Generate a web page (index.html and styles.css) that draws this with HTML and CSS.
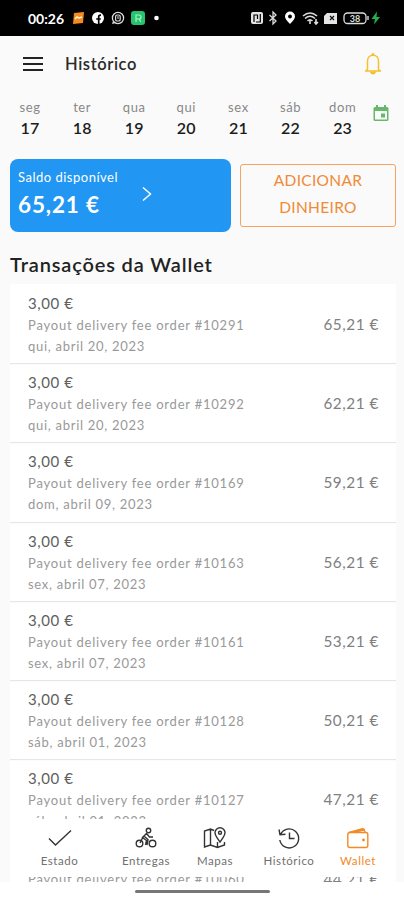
FILE: index.html
```
<!DOCTYPE html>
<html lang="pt">
<head>
<meta charset="utf-8">
<title>Histórico</title>
<link rel="stylesheet" href="styles.css">
</head>
<body>
<div class="phone">
  <div class="status">
    <span class="clock">00:26</span>
    <svg class="s-left" width="92" height="16" viewBox="0 0 92 16">
      <path d="M2 3L12 2L11 13L1 14Z" fill="#f58a1f"/><path d="M3 9L5 7L7 8L10 7" stroke="#fff3d8" stroke-width="1.5" fill="none"/>
      <circle cx="26" cy="8" r="6" fill="#fff"/><path d="M26.7 14V6.8Q26.7 5 29 5.2M24.2 9H28.8" stroke="#000" stroke-width="1.7" fill="none"/>
      <circle cx="46" cy="8" r="5.6" fill="none" stroke="#ddd" stroke-width="1.3"/><path d="M41 11L40 14L44 13" fill="#ddd"/><rect x="43.6" y="5" width="4.6" height="6" rx="1.6" fill="none" stroke="#ddd" stroke-width="1.2"/><path d="M46 6V9" stroke="#ddd"/>
      <rect x="59" y="1" width="14" height="14" rx="3" fill="#27c46f"/><path d="M64 12V5H67Q69 5 69 7T67 9H64M67 9L69 12" fill="none" stroke="#a6f1c8" stroke-width="1.2"/>
      <circle cx="84.500" cy="8" r="2.300" fill="#fff"/>
    </svg>
    <svg class="s-right" width="132" height="16" viewBox="0 0 132 16">
      <rect x="1" y="2" width="12" height="12" rx="2" fill="#e4e4e4"/><path d="M4 12V5H7.500V9M6 12H10.300V4" stroke="#000" stroke-width="1.200" fill="none"/>
      <path d="M19.500 5L26 11L23 14V2L26 5L19.500 11" stroke="#ddd" stroke-width="1.300" fill="none"/>
      <path d="M40 14Q35 9 35 6.500A5 5 0 0 1 45 6.500Q45 9 40 14Z" fill="#fff"/><circle cx="40" cy="6.500" r="1.900" fill="#000"/>
      <g fill="none" stroke="#ddd" stroke-width="1.600"><path d="M53 6Q60 0 67 6M55 8.500Q60 4 65 8.500M57.500 11Q60 8.500 62.500 11M60 10V14M66 9V14M64.500 12L66 14L68 12"/></g>
      <path d="M77 3H87V14H74V6Z" fill="#e4e4e4"/><path d="M80 6L84 10M84 6L80 10" stroke="#111" stroke-width="1.200"/>
      <rect x="94" y="3" width="22" height="10.500" rx="3.500" fill="none" stroke="#ddd" stroke-width="1.300"/><path d="M118 6V10" stroke="#ddd" stroke-width="1.400"/><text x="105" y="11.500" text-anchor="middle" class="battery">38</text>
      <path d="M127 1.500L121.500 9H125L124 14.500L130 7H126.500Z" fill="#22b14c"/>
    </svg>
  </div>

  <header class="top">
    <svg width="20" height="16" viewBox="0 0 20 16"><path d="M0 2H20M0 8H20M0 14H20" stroke="#222" stroke-width="1.900"/></svg>
    <h1>Histórico</h1>
    <svg class="bell" width="18" height="24" viewBox="0 0 18 24"><path d="M3.500 17.500V9C3.500 5.600 5.800 3.200 9 3.200S14.500 5.600 14.500 9V17.500L16.500 19H1.500Z" fill="none" stroke="#f5c02c" stroke-width="1.500" stroke-linejoin="round"/><path d="M7.500 3Q7.500 1 9 1T10.500 3ZM5.800 19.500H12.200Q11.500 22.500 9 22.500T5.800 19.500Z" fill="#f5c02c"/></svg>
  </header>

  <section class="week">
    <div class="day"><span>seg</span><b>17</b></div>
    <div class="day"><span>ter</span><b>18</b></div>
    <div class="day"><span>qua</span><b>19</b></div>
    <div class="day"><span>qui</span><b>20</b></div>
    <div class="day"><span>sex</span><b>21</b></div>
    <div class="day"><span>sáb</span><b>22</b></div>
    <div class="day"><span>dom</span><b>23</b></div>
    <svg class="calendar" width="16" height="18" viewBox="0 0 16 18"><path fill="#66b96b" fill-rule="evenodd" d="M3 1H5V3H11V1H13V3H14Q15.500 3 15.500 4.500V15.500Q15.500 17 14 17H2Q.5 17 .5 15.500V4.500Q.5 3 2 3H3ZM2 7V15.500H14V7ZM8 9.500H12V13.500H8Z"/></svg>
  </section>

  <section class="funds">
    <div class="balance">
      <div><p>Saldo disponível</p><strong>65,21 €</strong></div>
      <svg width="10" height="16" viewBox="0 0 10 16"><path d="M1 1.500L8.500 8L1 14.500" fill="none" stroke="#fff" stroke-width="1.500"/></svg>
    </div>
    <button class="add">ADICIONAR DINHEIRO</button>
  </section>

  <h2>Transações da Wallet</h2>
  <main class="list">
    <article class="row"><div><h3>3,00 €</h3><p>Payout delivery fee order #10291</p><p class="date">qui, abril 20, 2023</p></div><span class="total">65,21 €</span></article>
    <article class="row"><div><h3>3,00 €</h3><p>Payout delivery fee order #10292</p><p class="date">qui, abril 20, 2023</p></div><span class="total">62,21 €</span></article>
    <article class="row"><div><h3>3,00 €</h3><p>Payout delivery fee order #10169</p><p class="date">dom, abril 09, 2023</p></div><span class="total">59,21 €</span></article>
    <article class="row"><div><h3>3,00 €</h3><p>Payout delivery fee order #10163</p><p class="date">sex, abril 07, 2023</p></div><span class="total">56,21 €</span></article>
    <article class="row"><div><h3>3,00 €</h3><p>Payout delivery fee order #10161</p><p class="date">sex, abril 07, 2023</p></div><span class="total">53,21 €</span></article>
    <article class="row"><div><h3>3,00 €</h3><p>Payout delivery fee order #10128</p><p class="date">sáb, abril 01, 2023</p></div><span class="total">50,21 €</span></article>
    <article class="row"><div><h3>3,00 €</h3><p>Payout delivery fee order #10127</p><p class="date">sáb, abril 01, 2023</p></div><span class="total">47,21 €</span></article>
    <article class="row last"><div><p>Payout delivery fee order #10060</p></div><span class="total">44,21 €</span></article>
  </main>

  <nav class="tabs">
    <a><svg width="24" height="24" viewBox="0 0 24 24"><path d="M1 12.500L7.500 19L23 4.500"/></svg>Estado</a>
    <a><svg width="24" height="24" viewBox="0 0 24 24"><circle cx="5.500" cy="17.500" r="3.300"/><circle cx="18.500" cy="17.500" r="3.300"/><circle cx="14.500" cy="4.500" r="2.200"/><path d="M12.500 7.500L8.500 11.500L12.500 14.500L11.500 19M10.500 10.500L14 13.500L13 19M12.500 7.500L15.500 11H19M8.500 12L6 17"/></svg>Entregas</a>
    <a><svg width="24" height="24" viewBox="0 0 24 24"><path d="M11 4.500L7.500 3L1.500 5V21L7.500 19L14.500 21.500L21.500 19V16M7.500 3V19M14.500 16V21.500M17 16C14 12 12 9.500 12 6.800A5 5 0 0 1 22 6.800C22 9.500 20 12 17 16Z"/><circle cx="17" cy="6.800" r="1.500"/></svg>Mapas</a>
    <a><svg width="24" height="24" viewBox="0 0 24 24"><path d="M3.500 8.500A9.500 9.500 0 1 1 2.800 14M2 3.500L3 8.800L8.500 8.200M12.500 6.500V12.500H17.500"/></svg>Histórico</a>
    <a class="active"><svg width="24" height="24" viewBox="0 0 24 24"><rect x="1.800" y="6.500" width="20" height="15" rx="2"/><path d="M3 6.500L17 2.500L19.500 6.500M8 6.500L19 3.500"/><circle cx="17.500" cy="14" r=".7"/></svg>Wallet</a>
  </nav>
  <footer class="gesture"><span></span></footer>
</div>
</body>
</html>
```
FILE: styles.css
```
* { box-sizing: border-box; }
body, h1, h2, h3, p { margin: 0; }
body { font-family: Lato, "Open Sans", sans-serif; background: #fafafa; }
.phone {
  position: relative;
  display: flex;
  flex-direction: column;
  width: 404px;
  height: 900px;
  overflow: hidden;
  background: #fafafa;
}
.status {
  flex: none;
  display: flex;
  align-items: center;
  height: 36px;
  padding-left: 28px;
  background: #000;
  color: #fff;
}
.clock { width: 44px; font-size: 14px; font-weight: 700; letter-spacing: 0; }
.s-right { margin-left: 86px; }
.battery { font-size: 9px; font-weight: 700; fill: #ddd; }
.top {
  flex: none;
  display: flex;
  align-items: center;
  height: 56px;
  padding: 0 23px;
}
h1 { margin-left: 22px; padding-bottom: 1px; font-size: 16.5px; font-weight: 600; letter-spacing: .6px; color: #2b2b2b; }
.bell { margin-left: auto; margin-right: -1px; }
.week {
  flex: none;
  display: grid;
  grid-template-columns: repeat(7, 52.1px) 16px;
  height: 67px;
  padding: 5px 0 0 4px;
}
.day { display: flex; flex-direction: column; align-items: center; }
.day span { font-size: 13px; line-height: 20px; letter-spacing: .6px; color: #888; }
.day b { font-size: 16px; line-height: 22px; font-weight: 600; letter-spacing: .2px; color: #1c1c1c; }
.calendar { margin: 7px 0 0 4px; }
.funds {
  flex: none;
  display: flex;
  align-items: center;
  gap: 9px;
  height: 73px;
  padding: 0 8px 0 10px;
}
.balance {
  display: flex;
  justify-content: space-between;
  width: 221px;
  height: 73px;
  padding: 8px 79px 0 8px;
  border-radius: 8px;
  background: #2196f3;
  color: #fff;
}
.balance p { font-size: 13px; line-height: 20px; letter-spacing: .5px; white-space: nowrap; }
.balance strong { display: block; font-size: 22.5px; line-height: 36px; letter-spacing: .85px; }
.balance svg { flex: none; margin-top: 19px; }
.add {
  width: 156px;
  height: 63px;
  padding: 0 30px 3px;
  border: 1px solid #f4a460;
  border-radius: 3px;
  background: transparent;
  font: 400 15.5px/27px Lato, sans-serif;
  letter-spacing: .3px;
  color: #ef8a35;
}
h2 { flex: none; height: 52px; padding: 16px 10px 0; font-size: 20px; line-height: 32px; font-weight: 600; letter-spacing: .85px; color: #222; white-space: nowrap; }
.list { flex: none; height: 598px; margin: 0 8px 0 10px; overflow: hidden; background: #fff; }
.row {
  display: flex;
  justify-content: space-between;
  height: 79.2px;
  padding: 8px 17px 0 18px;
  box-shadow: 0 1px 1px #e6e6e6;
}
.row h3 { font-size: 15px; line-height: 22px; font-weight: 400; letter-spacing: .6px; color: #606060; }
.row p { padding-top: 1px; font-size: 13px; line-height: 20px; letter-spacing: .78px; color: #999; }
.row .date { letter-spacing: .72px; }
.row.last { height: 44px; padding-top: 30px; box-shadow: none; }
.total { padding-top: 21px; font-size: 15.3px; line-height: 22px; letter-spacing: .55px; color: #808080; }
.last .total { padding-top: 0; }
.tabs {
  position: absolute;
  left: 10px;
  right: 8px;
  top: 819px;
  display: grid;
  grid-template-columns: 99px 74px 64px 84px 54px;
  height: 58px;
  background: #fff;
}
.tabs a {
  display: flex;
  flex-direction: column;
  align-items: center;
  padding-top: 7px;
  font-size: 11.5px;
  line-height: 22px;
  letter-spacing: .55px;
  color: #707070;
}
.tabs svg { flex: none; fill: none; stroke: #333; stroke-width: 1.4; }
.tabs .active { color: #f28a25; }
.tabs .active svg { stroke: #f28a25; }
.gesture { flex: none; display: flex; justify-content: center; height: 18px; padding-top: 8px; background: #fff; }
.gesture span { width: 135px; height: 3px; border-radius: 2px; background: #777; }
```
